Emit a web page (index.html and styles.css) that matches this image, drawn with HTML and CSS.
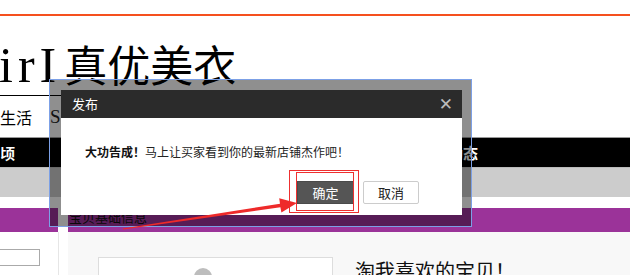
FILE: index.html
```html
<!DOCTYPE html>
<html lang="zh-CN">
<head>
    <meta charset="UTF-8">
    <title>发布</title>
    <link rel="stylesheet" href="styles.css">
</head>
<body>
    <div class="page">
        <div class="topbar"></div>
        <div class="logo">
            <span class="logo-en">irI</span>
            <span class="logo-cn">真优美衣</span>
        </div>
        <div class="tabs">
            <span class="tab">生活</span>
            <span class="tab-s">S</span>
        </div>
        <div class="nav">
            <span class="nav-item">顷</span>
            <span class="nav-item nav-last">动态</span>
        </div>
        <div class="subnav"></div>
        <div class="main">
            <div class="side">
                <div class="side-bar"></div>
                <div class="side-body">
                    <div class="side-input"></div>
                </div>
            </div>
            <div class="content">
                <div class="content-bar">宝贝基础信息</div>
                <div class="content-body">
                    <div class="pic-box"><span class="spin"></span></div>
                    <div class="fav-title">淘我喜欢的宝贝！</div>
                </div>
            </div>
        </div>

        <!-- 弹出框 -->
        <div class="dialog-mask">
            <div class="dialog">
                <div class="dialog-head">
                    <span>发布</span>
                    <span class="dialog-close">✕</span>
                </div>
                <div class="dialog-body">
                    <p class="dialog-msg"><b>大功告成！</b>马上让买家看到你的最新店铺杰作吧！</p>
                    <div class="dialog-btns">
                        <button class="btn btn-ok">确定</button>
                        <button class="btn btn-cancel">取消</button>
                    </div>
                </div>
            </div>
        </div>

        <!-- 截图上的红色标注 -->
        <svg class="marks" width="630" height="275" viewBox="0 0 630 275">
            <rect x="289.5" y="170.5" width="69" height="42" fill="none" stroke="#ee3030" stroke-width="1"/>
            <rect x="296.5" y="172.5" width="57" height="38" fill="none" stroke="#ee3030" stroke-width="1"/>
            <polygon points="123.1,229.6 280.4,207.2 281.4,212.6 297,203 279.2,198.2 280,203.8 122.9,228.4" fill="#ee2a2a"/>
        </svg>
    </div>
</body>
</html>
```

FILE: styles.css
```css
body {
    margin: 0;
    font-family: "Noto Sans CJK SC", "Liberation Sans", sans-serif;
    color: #333;
}
.page {
    position: relative;
    width: 630px;
    height: 275px;
    overflow: hidden;
    background-color: #fff;
}
.topbar {
    height: 14px;
    border-bottom: 2px solid #f5501e;
}
/* 店铺名 */
.logo {
    height: 79px;
    display: flex;
    align-items: flex-end;
    white-space: nowrap;
    color: #000;
}
.logo-en {
    margin: 0 0 5px -1px;
    font-family: "Liberation Serif", serif;
    font-size: 50px;
    line-height: 50px;
    letter-spacing: 5px;
}
.logo-cn {
    margin: 0 0 6px 3px;
    font-size: 43px;
    line-height: 52px;
}
.tabs {
    width: 200px;
    height: 41px;
    border-top: 1px solid #000;
    display: flex;
    align-items: center;
}
.tab {
    font-size: 16px;
    color: #000;
}
.tab-s {
    margin-left: 18px;
    font-family: "Liberation Serif", serif;
    font-size: 19px;
    color: #222;
}
.nav {
    height: 29px;
    border-top: 1px solid #999;
    background-color: #000;
    display: flex;
    align-items: center;
}
.nav-item {
    color: #fff;
    font-size: 15px;
    font-weight: 700;
}
.nav-last {
    margin-left: 433px;
}
.subnav {
    height: 29px;
    border-top: 1px solid #bbb;
    background-color: #ccc;
    margin-bottom: 11px;
}
.main {
    display: flex;
    gap: 9px;
}
.side {
    width: 59px;
}
.side-bar {
    width: 58px;
    height: 24px;
    background-color: #9b3399;
}
.side-body {
    height: 60px;
    border-right: 1px solid #e6e6e6;
    padding-top: 17px;
}
.side-input {
    width: 39px;
    height: 15px;
    margin-left: -1px;
    border: 1px solid #aaa;
}
.content {
    flex: 1;
}
.content-bar {
    height: 24px;
    padding-left: 1px;
    background-color: #9b3399;
    color: #111;
    font-size: 13px;
    line-height: 18px;
}
.content-body {
    height: 60px;
    background-color: #f8f8f8;
    display: flex;
    align-items: flex-start;
    padding: 25px 0 0 30px;
}
.pic-box {
    width: 233px;
    height: 60px;
    border: 1px solid #ddd;
    background-color: #fff;
}
.spin {
    display: block;
    width: 18px;
    height: 18px;
    margin: 10px 0 0 95px;
    border-radius: 50%;
    background-color: #bdbdbd;
}
.fav-title {
    margin: 0 0 0 22px;
    font-size: 20px;
    line-height: 28px;
    color: #111;
}
/* 弹出框 */
.dialog-mask {
    position: absolute;
    left: 49px;
    top: 79px;
    padding: 10px 9px 11px 11px;
    border: 1px solid #7ca0e6;
    background-color: rgba(0, 0, 0, .44);
}
.dialog {
    width: 401px;
    height: 125px;
    background-color: #fff;
}
.dialog-head {
    height: 28px;
    padding: 0 9px 0 11px;
    background-color: #2b2b2b;
    color: #fff;
    font-size: 13px;
    line-height: 28px;
    display: flex;
    justify-content: space-between;
}
.dialog-close {
    color: #bbb;
    font-family: "DejaVu Sans", sans-serif;
    font-size: 17px;
}
.dialog-body {
    padding: 27px 43px 0 24px;
}
.dialog-msg {
    margin: 0;
    font-size: 12px;
    line-height: 14px;
    color: #222;
}
.dialog-msg b {
    color: #111;
}
.dialog-btns {
    margin-top: 22px;
    display: flex;
    justify-content: flex-end;
    gap: 9px;
}
.btn {
    height: 23px;
    padding: 0;
    font-family: "Noto Sans CJK SC", sans-serif;
    font-size: 13px;
    line-height: 21px;
}
.btn-ok {
    width: 57px;
    border: 1px solid #4a4a4a;
    background-color: #555;
    color: #fff;
}
.btn-cancel {
    width: 56px;
    border: 1px solid #ccc;
    border-radius: 2px;
    background-color: #fff;
    color: #222;
}
.marks {
    position: absolute;
    left: 0;
    top: 0;
    pointer-events: none;
}
```
